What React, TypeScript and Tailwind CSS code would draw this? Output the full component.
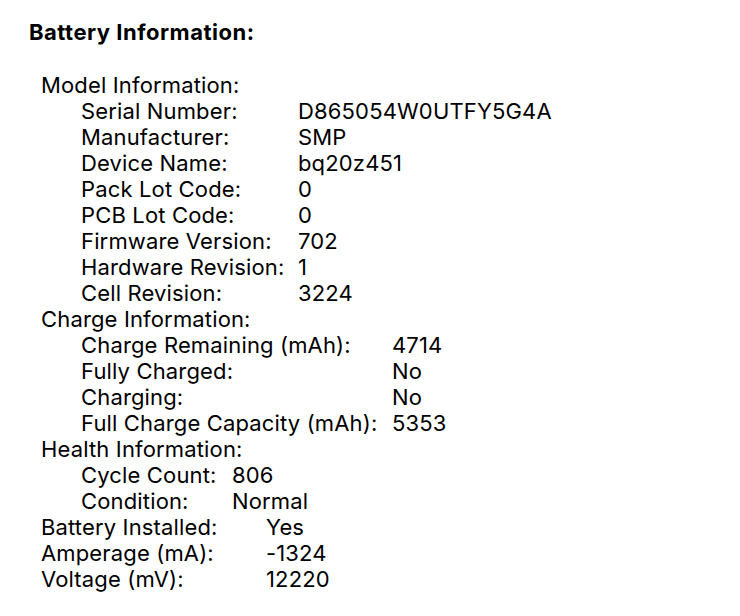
import React from "react";

type Row = [string, string];

const model: Row[] = [
  ["Serial Number:", "D865054W0UTFY5G4A"],
  ["Manufacturer:", "SMP"],
  ["Device Name:", "bq20z451"],
  ["Pack Lot Code:", "0"],
  ["PCB Lot Code:", "0"],
  ["Firmware Version:", "702"],
  ["Hardware Revision:", "1"],
  ["Cell Revision:", "3224"],
];

const charge: Row[] = [
  ["Charge Remaining (mAh):", "4714"],
  ["Fully Charged:", "No"],
  ["Charging:", "No"],
  ["Full Charge Capacity (mAh):", "5353"],
];

const health: Row[] = [
  ["Cycle Count:", "806"],
  ["Condition:", "Normal"],
];

const top: Row[] = [
  ["Battery Installed:", "Yes"],
  ["Amperage (mA):", "-1324"],
  ["Voltage (mV):", "12220"],
];

function Rows({ rows, cols }: { rows: Row[]; cols: string }) {
  return (
    <div className={`grid ${cols}`}>
      {rows.map(([k, v]) => (
        <React.Fragment key={k}>
          <div className="whitespace-nowrap">{k}</div>
          <div className="whitespace-nowrap">{v}</div>
        </React.Fragment>
      ))}
    </div>
  );
}

export default function App() {
  return (
    <div
      className="w-[740px] h-[616px] bg-white text-black pl-[29px] pt-[19px] text-[22px] leading-[26px] tracking-[0.15px] antialiased"
      style={{ fontFamily: "Inter, 'Liberation Sans', sans-serif" }}
    >
      <div className="font-bold tracking-[0.5px]">Battery Information:</div>
      <div className="pl-[12px] mt-[27px]">
        <div>Model Information:</div>
        <div className="pl-[40px]">
          <Rows rows={model} cols="grid-cols-[217px_1fr]" />
        </div>
        <div>Charge Information:</div>
        <div className="pl-[40px]">
          <Rows rows={charge} cols="grid-cols-[311px_1fr]" />
        </div>
        <div>Health Information:</div>
        <div className="pl-[40px]">
          <Rows rows={health} cols="grid-cols-[151px_1fr]" />
        </div>
        <Rows rows={top} cols="grid-cols-[225px_1fr]" />
      </div>
    </div>
  );
}
